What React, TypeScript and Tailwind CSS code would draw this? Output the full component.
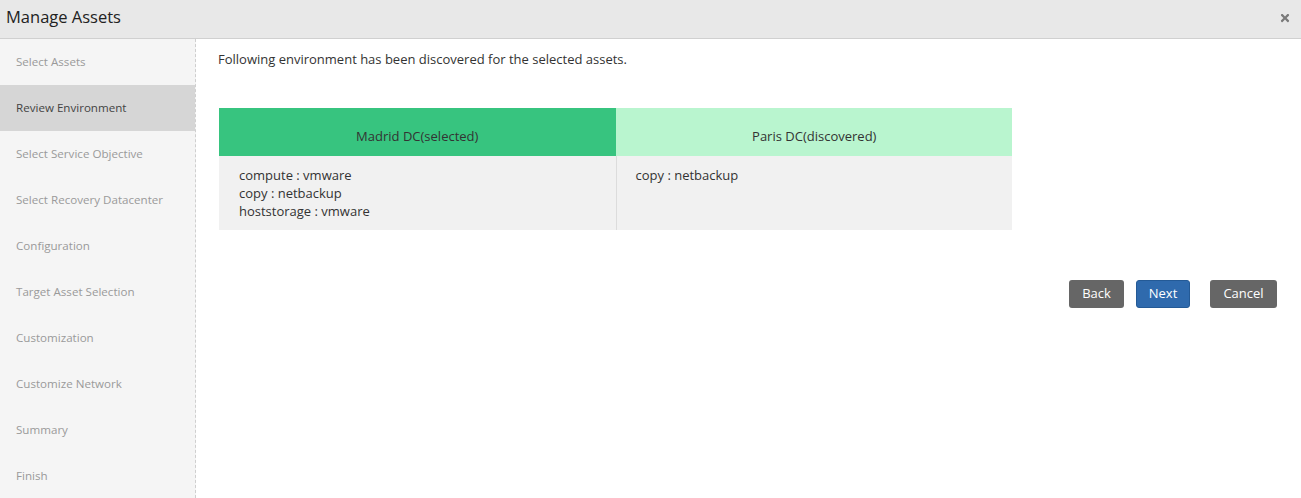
import { FaTimes } from 'react-icons/fa';

const STEPS = [
  'Select Assets',
  'Review Environment',
  'Select Service Objective',
  'Select Recovery Datacenter',
  'Configuration',
  'Target Asset Selection',
  'Customization',
  'Customize Network',
  'Summary',
  'Finish',
];

const ACTIVE = 'Review Environment';

export default function App() {
  return (
    <div className="w-[1301px] h-[498px] bg-white flex flex-col overflow-hidden" style={{ fontFamily: '"Open Sans", sans-serif' }}>
      {/* Title bar */}
      <div className="h-[39px] shrink-0 bg-[#e8e8e8] border-b border-[#d0d0d0] flex items-center justify-between pl-[6px] pr-[10px]">
        <h1 className="text-[16.5px] text-[#222] -mt-[3px]">Manage Assets</h1>
        <FaTimes className="w-[12px] h-[12px] text-[#7a7a7a] -mt-[3px]" />
      </div>

      <div className="flex flex-1 min-h-0">
        {/* Steps */}
        <div className="w-[196px] shrink-0 bg-[#f5f5f5] border-r border-dashed border-[#cfcfcf]">
          {STEPS.map(s => (
            <div
              key={s}
              className={`h-[46px] flex items-center pl-[16px] text-[11.6px] ${
                s === ACTIVE ? 'bg-[#d6d6d6] text-[#444]' : 'text-[#9a9a9a]'
              }`}
            >
              {s}
            </div>
          ))}
        </div>

        {/* Content */}
        <div className="flex-1 pl-[22px] pt-[11px] pr-[24px]">
          <p className="text-[13px] text-[#333] leading-[18px]">
            Following environment has been discovered for the selected assets.
          </p>

          <div className="mt-[40px] ml-[1px] w-[793px] grid grid-cols-2 text-[13px] text-[#333]">
            <div className="h-[48px] bg-[#37c47f] flex items-end justify-center pb-[10px]">Madrid DC(selected)</div>
            <div className="h-[48px] bg-[#b9f5cf] flex items-end justify-center pb-[10px] border-l border-[#b9f5cf]">Paris DC(discovered)</div>
            <div className="h-[74px] bg-[#f1f1f1] pl-[20px] pt-[10px] leading-[18px]">
              <div>compute : vmware</div>
              <div>copy : netbackup</div>
              <div>hoststorage : vmware</div>
            </div>
            <div className="h-[74px] bg-[#f1f1f1] pl-[19px] pt-[10px] leading-[18px] border-l border-[#dcdcdc]">
              <div>copy : netbackup</div>
            </div>
          </div>

          <div className="mt-[50px] flex justify-end text-[13px] text-white">
            <button className="w-[55px] h-[28px] rounded-[3px] bg-[#666]">Back</button>
            <button className="ml-[12px] w-[54px] h-[28px] rounded-[3px] bg-[#2f6aad] border border-[#245a96]">Next</button>
            <button className="ml-[20px] w-[67px] h-[28px] rounded-[3px] bg-[#666]">Cancel</button>
          </div>
        </div>
      </div>
    </div>
  );
}
